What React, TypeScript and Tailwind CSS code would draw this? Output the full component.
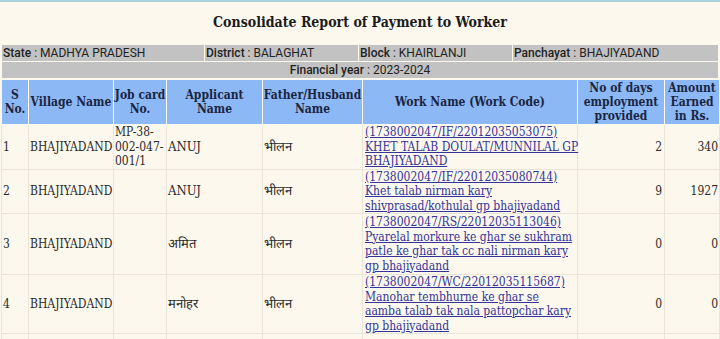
import React from "react";

const serif = "font-['DejaVu_Serif_Condensed','DejaVu_Serif',serif] font-stretch-semi-condensed";

type Row = {
  s: string;
  village: string;
  job: string[];
  applicant: string;
  father: string;
  work: string[];
  days: string;
  amount: string;
  h: string;
};

const rows: Row[] = [
  {
    s: "1",
    village: "BHAJIYADAND",
    job: ["MP-38-", "002-047-", "001/1"],
    applicant: "ANUJ",
    father: "भीलन",
    work: ["(1738002047/IF/22012035053075)", "KHET TALAB DOULAT/MUNNILAL GP", "BHAJIYADAND"],
    days: "2",
    amount: "340",
    h: "h-[44px]",
  },
  {
    s: "2",
    village: "BHAJIYADAND",
    job: [],
    applicant: "ANUJ",
    father: "भीलन",
    work: ["(1738002047/IF/22012035080744)", "Khet talab nirman kary", "shivprasad/kothulal gp bhajiyadand"],
    days: "9",
    amount: "1927",
    h: "h-[42px]",
  },
  {
    s: "3",
    village: "BHAJIYADAND",
    job: [],
    applicant: "अमित",
    father: "भीलन",
    work: [
      "(1738002047/RS/22012035113046)",
      "Pyarelal morkure ke ghar se sukhram",
      "patle ke ghar tak cc nali nirman kary",
      "gp bhajiyadand",
    ],
    days: "0",
    amount: "0",
    h: "h-[61px]",
  },
  {
    s: "4",
    village: "BHAJIYADAND",
    job: [],
    applicant: "मनोहर",
    father: "भीलन",
    work: [
      "(1738002047/WC/22012035115687)",
      "Manohar tembhurne ke ghar se",
      "aamba talab tak nala pattopchar kary",
      "gp bhajiyadand",
    ],
    days: "0",
    amount: "0",
    h: "h-[58px]",
  },
];

const td = "border border-[#ebe5d8] align-middle px-[1px] py-0";
const th = "border border-[#fcf8ee] align-middle px-0 py-0 font-bold text-center whitespace-nowrap";

export default function App() {
  return (
    <div className="w-[720px] h-[339px] overflow-hidden bg-[#fcf8ee] border-t-2 border-[#a9d3e1]">
      <h1 className={`${serif} text-center font-bold text-[14px] leading-[18px] text-[#1c1c1c] pt-[11px] pb-[14px]`}>
        Consolidate Report of Payment to Worker
      </h1>

      <div className="px-[2px] font-['Roboto',sans-serif] text-[12px] leading-[16px] text-[#222]">
        <div className="flex gap-px w-[716px]">
          <div className="w-[202px] bg-[#c2c2c2] pl-[1px] h-[16px]">
            <b className="font-medium">State</b> : MADHYA PRADESH
          </div>
          <div className="w-[153px] bg-[#c2c2c2] pl-[1px] h-[16px]">
            <b className="font-medium">District</b> : BALAGHAT
          </div>
          <div className="w-[153px] bg-[#c2c2c2] pl-[1px] h-[16px]">
            <b className="font-medium">Block</b> : KHAIRLANJI
          </div>
          <div className="flex-1 bg-[#c2c2c2] pl-[1px] h-[16px]">
            <b className="font-medium">Panchayat</b> : BHAJIYADAND
          </div>
        </div>
        <div className="mt-px w-[716px] bg-[#c2c2c2] h-[16px] text-center">
          <b className="font-medium">Financial year</b> : 2023-2024
        </div>
      </div>

      <div className="px-[1px] mt-px">
        <table className={`${serif} table-fixed border-collapse w-[718px] text-[12px] leading-[14.5px]`}>
          <colgroup>
            <col className="w-[27px]" />
            <col className="w-[85px]" />
            <col className="w-[53px]" />
            <col className="w-[96px]" />
            <col className="w-[100px]" />
            <col className="w-[215px]" />
            <col className="w-[87px]" />
            <col className="w-[55px]" />
          </colgroup>
          <thead>
            <tr className="bg-[#8cb8f6] text-[#1b2540] h-[45px] text-[12px] leading-[14px]">
              <th className={th}>S<br />No.</th>
              <th className={th}>Village Name</th>
              <th className={th}>Job card<br />No.</th>
              <th className={th}>Applicant<br />Name</th>
              <th className={th}>Father/Husband<br />Name</th>
              <th className={th}>Work Name (Work Code)</th>
              <th className={th}>No of days<br />employment<br />provided</th>
              <th className={th}>Amount<br />Earned<br />in Rs.</th>
            </tr>
          </thead>
          <tbody className="text-[#2a2a2a]">
            {rows.map((r) => (
              <tr key={r.s} className={r.h}>
                <td className={`${td} pl-[1px]`}>{r.s}</td>
                <td className={td}>{r.village}</td>
                <td className={td}>
                  {r.job.map((j, i) => (
                    <div key={i}>{j}</div>
                  ))}
                </td>
                <td className={`${td} text-[13px]`}>{r.applicant}</td>
                <td className={`${td} text-[13px]`}>{r.father}</td>
                <td className={`${td} pl-[2px]`}>
                  <a href="#" className="underline text-[#33339a] whitespace-nowrap">
                    {r.work.map((w, i) => (
                      <div key={i}>{w}</div>
                    ))}
                  </a>
                </td>
                <td className={`${td} text-right pr-[2px]`}>{r.days}</td>
                <td className={`${td} text-right pr-[1px]`}>{r.amount}</td>
              </tr>
            ))}
            <tr className="h-[40px]">
              <td className={td}></td>
              <td className={td}></td>
              <td className={td}></td>
              <td className={td}></td>
              <td className={td}></td>
              <td className={td}></td>
              <td className={td}></td>
              <td className={td}></td>
            </tr>
          </tbody>
        </table>
      </div>
    </div>
  );
}
